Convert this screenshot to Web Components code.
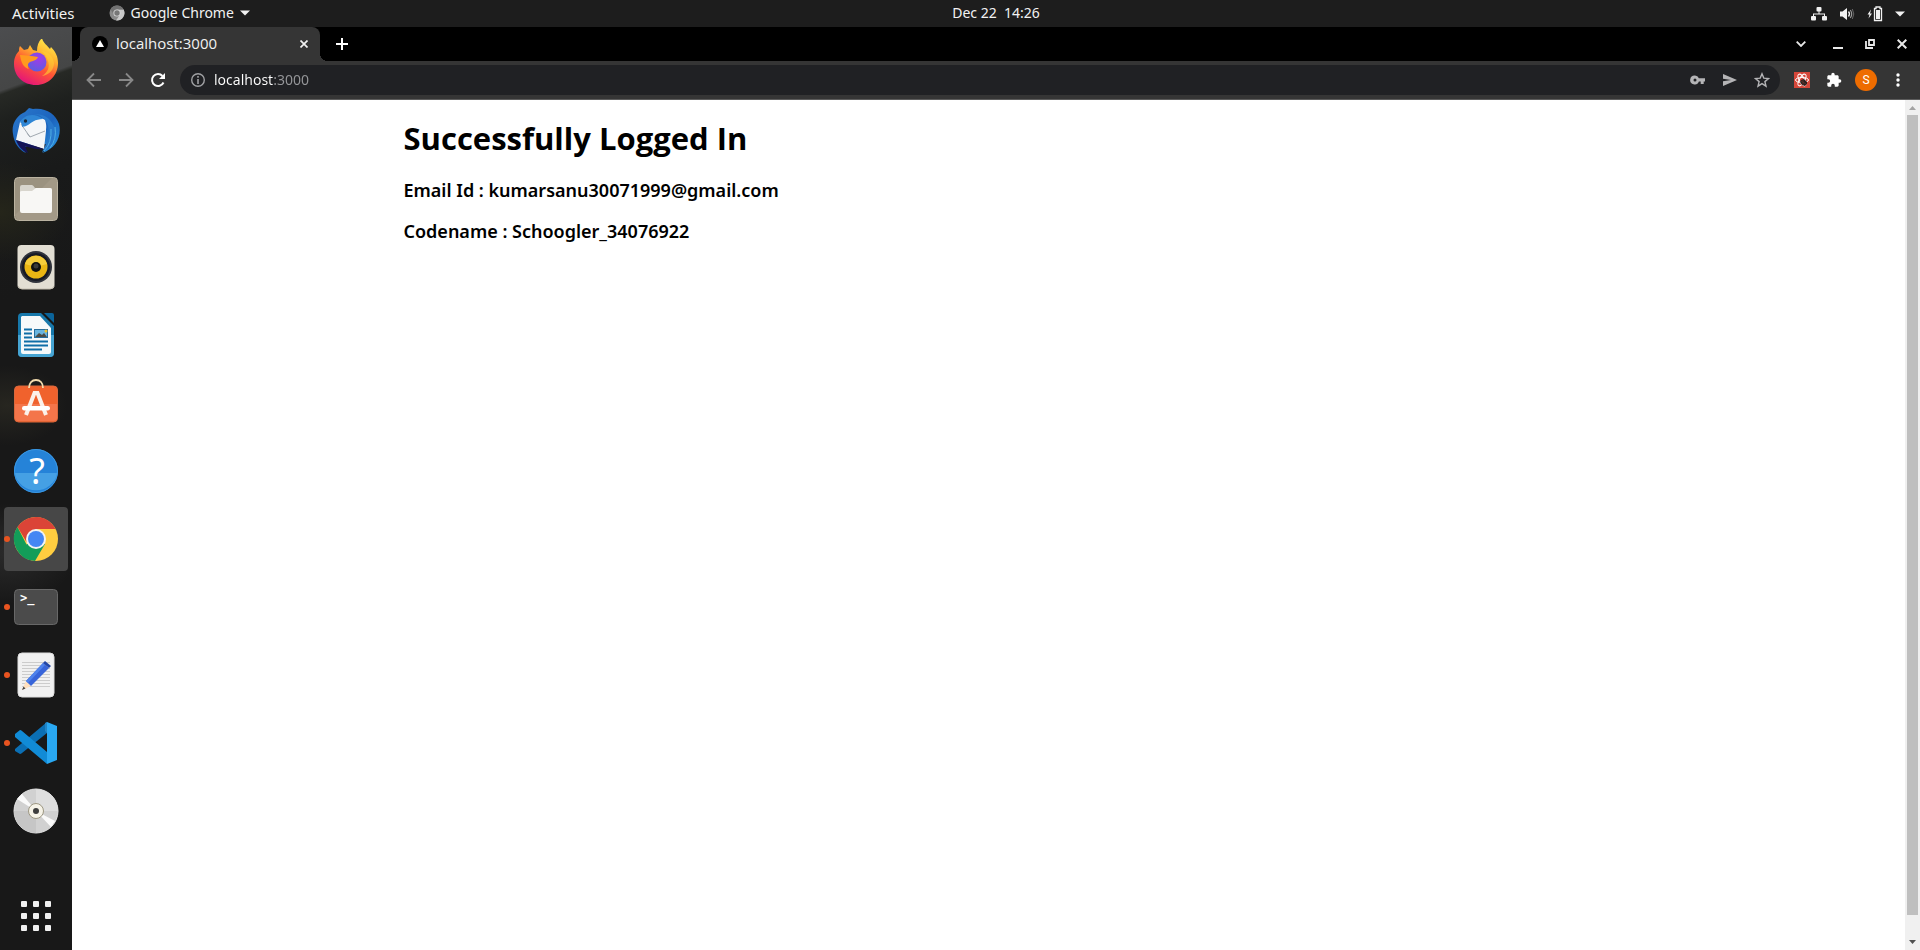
<!DOCTYPE html>
<html lang="en">
<head>
<meta charset="utf-8">
<title>localhost:3000</title>
<style>
  html, body { height: 100%; }
  body { margin: 0; background: #1d1d1d; font-family: "Noto Sans", "Open Sans", sans-serif; }
</style>
</head>
<body>
<desktop-shell></desktop-shell>

<script>
const define = (name, html) => {
  const template = document.createElement('template');
  template.innerHTML = html;
  customElements.define(name, class extends HTMLElement {
    constructor() {
      super();
      this.attachShadow({ mode: 'open' }).append(template.content.cloneNode(true));
    }
  });
};

/* Square button that holds one icon */
define('icon-button', `
<style>
  :host { display: block; }
  button { display: grid; place-items: center; width: 32px; height: 32px; margin: 0; padding: 0; border: 0; background: none; color: inherit; font: inherit; }
</style>
<button type="button"><slot></slot></button>`);

/* GNOME top bar */
define('top-bar', `
<style>
  :host { display: grid; grid-template-columns: 1fr auto 1fr; align-items: center; height: 27px; background: #1d1d1d; color: #f2f2f2; font-size: 14px; }
  .left { display: flex; align-items: center; gap: 34px; padding-left: 12px; }
  .right { display: flex; align-items: center; justify-content: flex-end; gap: 12px; padding-right: 15px; }
  button { display: flex; align-items: center; gap: 6px; padding: 0 0 2px; border: 0; background: none; color: inherit; font: inherit; line-height: 24px; white-space: pre; }
  .wide { font-size: 15px; }
  .date { margin-left: 72px; }
  svg { display: block; }
</style>
<div class="left">
  <button type="button" class="wide">Activities</button>
  <button type="button"><svg width="16" height="16" viewBox="0 0 16 16"><circle cx="8" cy="8" r="7.5" fill="#8a8a8a"/><path d="M8 4.5h6.600a7.500 7.500 0 0 1-7.600 10.900L10.900 9.700z" fill="#c9c9c9"/><path d="M1.500 4.300 5 9.900l-.5-3.500A4 4 0 0 1 8 4.500h6.600A7.500 7.500 0 0 0 1.500 4.300z" fill="#727272"/><circle cx="8" cy="8" r="3.600" fill="#d8d8d8"/><circle cx="8" cy="8" r="2.700" fill="#777"/></svg>Google Chrome<svg width="10" height="6" viewBox="0 0 10 6"><path d="M0 .5h10L5 5.500z" fill="#f2f2f2"/></svg></button>
</div>
<button type="button" class="date">Dec 22  14:26</button>
<div class="right">
  <svg width="16" height="16" viewBox="0 0 16 16" fill="#f2f2f2"><rect x="5.500" y="1" width="5" height="4.500" rx="1"/><rect x="0" y="10" width="5" height="4.500" rx="1"/><rect x="11" y="10" width="5" height="4.500" rx="1"/><path d="M7.500 5h1v2.500h5.500V10h-1V8.500H3V10H2V7.500h5.500z"/></svg>
  <svg width="16" height="16" viewBox="0 0 16 16"><path d="M1 5.500h2.500L8 2v12l-4.500-3.500H1z" fill="#f2f2f2"/><path d="M9.500 5.500q2 2.500 0 5" stroke="#f2f2f2" stroke-width="1.300" fill="none"/><path d="M11.300 4q2.800 4 0 8" stroke="#999" stroke-width="1.200" fill="none"/><path d="M13.300 3q3 5 0 10" stroke="#666" stroke-width="1" fill="none"/></svg>
  <svg width="16" height="16" viewBox="0 0 16 16"><path d="M4 3.500.500 8.500h2L1.500 12.500 5 7.500H3z" fill="#f2f2f2"/><path d="M7.500 2.500H9V1h4v1.500h1.500v12h-7z" fill="none" stroke="#f2f2f2" stroke-width="1.300"/><rect x="9" y="4" width="4" height="9" fill="#f2f2f2"/></svg>
  <svg width="10" height="6" viewBox="0 0 10 6"><path d="M0 .5h10L5 5.500z" fill="#f2f2f2"/></svg>
</div>`);

/* One launcher of the dock; "running" shows the dot, "active" the plate */
define('dock-item', `
<style>
  :host { display: block; position: relative; }
  button { display: grid; place-items: center; width: 64px; height: 64px; padding: 0; border: 0; border-radius: 4px; background: none; }
  :host([active]) button { background: #474747; }
  :host([running])::before { content: ""; position: absolute; left: 0; top: 29px; width: 6px; height: 6px; border-radius: 50%; background: #e95420; }
</style>
<button type="button"><slot></slot></button>`);

define('app-dock', `
<style>
  :host { display: flex; flex-direction: column; gap: 4px; box-sizing: border-box; width: 72px; padding: 4px 4px 2px;
    background:
      radial-gradient(ellipse 60px 40px at 10% 41%, #272620 0, transparent 100%),
      radial-gradient(ellipse 70px 50px at 10% 57%, #2a2a2a 0, transparent 100%),
      radial-gradient(ellipse 70px 50px at 0 20%, #25251a 0, transparent 100%),
      linear-gradient(160deg, #4c4d4f 0, #454646 60px, #272925 64px, #1e201e 90px, #191a1a 150px, transparent 260px),
      #181818; }
  .apps { margin-top: auto; }
  svg { display: block; }
</style>
<dock-item><svg width="48" height="48" viewBox="0 2 48 48">
  <defs><linearGradient id="fx" x1=".8" y1="0" x2=".3" y2="1"><stop offset="0" stop-color="#fff44f"/><stop offset=".35" stop-color="#ffb02e"/><stop offset=".6" stop-color="#ff5634"/><stop offset="1" stop-color="#e3127c"/></linearGradient><radialGradient id="fp" cx=".6" cy=".3" r=".8"><stop offset="0" stop-color="#a23be8"/><stop offset="1" stop-color="#5560e0"/></radialGradient></defs>
  <path d="M2 27c0-6 2-10 5-13 0-2 0-3 1-5l4 4 4-1 2-4 3 5 4 1c0-6 2-10 5-13 1 5 5 7 8 11l1-2c5 5 7 10 7 16 0 12-9 22-22 22S2 39 2 27z" fill="url(#fx)"/>
  <circle cx="25" cy="25" r="9.500" fill="url(#fp)"/>
  <path d="M8 18c5 0 12 1 18 2-1 3-5 4-8 5-2 1-3 4-1 7-5-1-8-6-9-14z" fill="#ff9a1f"/>
  <path d="M29 14c7 0 12 5 13 12 0 7-5 12-12 13 6-4 8-9 6-15-1-4-4-8-7-10z" fill="#ffcf35" opacity=".6"/>
</svg></dock-item>
<dock-item><svg width="48" height="48" viewBox="0 0 48 48">
  <defs><linearGradient id="tb" x1="0" y1="0" x2="1" y2="1"><stop offset="0" stop-color="#2a78cc"/><stop offset=".55" stop-color="#1c63bd"/><stop offset="1" stop-color="#2b9be5"/></linearGradient></defs>
  <path d="M1 27C-1 17 5 8 13 5l4-4 4 1c12-2 23 5 26 15 3 12-3 25-17 29 4-3 5-5 5-9L9 40l5 6C7 43 2 36 1 27z" fill="url(#tb)"/>
  <path d="M18 8c8-2 16 3 18 11 2 9-1 17-6 26 8-4 13-9 14-17-1-12-9-24-26-20z" fill="#2878cb"/>
  <path d="M39 22q1 14-7 22M43 20q2 12-5 21" stroke="#4fb0e6" stroke-width="1" fill="none"/>
  <path d="M8 15c5-4 20-6 25-2 2 6 1 8 1 11l-2 18L4 33z" fill="#f4f6f8"/>
  <path d="m9 17 9 13 15-6M18 30l-3-4" stroke="#a0a8b0" stroke-width="1" fill="none"/>
  <path d="m4 33 28 9c-7 1-13-1-19-3l3 7C10 44 6 39 4 33z" fill="#151458"/>
  <path d="M8 15c4-7 14-10 23-3-8 0-12 4-15 6s-4 1-6 2c0-2 0-3-2-5z" fill="#2f86d5"/>
  <circle cx="13.500" cy="14" r="1.700" fill="#1a2836"/>
</svg></dock-item>
<dock-item><svg width="48" height="48" viewBox="0 0 48 48">
  <rect x="2.500" y="2.500" width="43" height="43" rx="4" fill="#9b9280" stroke="#bbb3a1"/>
  <path d="M3 40 40 3h2q3 0 3 3v36q0 3-3 3H6z" fill="#a89f8c" opacity=".6"/>
  <path d="M8 12q0-2 2-2h10q1 0 3 3h15q2 0 2 2v15H8z" fill="#d8d5cd"/>
  <path d="M8 17q0-1 2-1h10l4-3h14q2 0 2 2v21q0 2-2 2H10q-2 0-2-2z" fill="#f8f7f5"/>
</svg></dock-item>
<dock-item><svg width="48" height="48" viewBox="0 0 48 48">
  <rect x="5.500" y="2" width="37" height="44" rx="4" fill="#e2ded3"/><path d="M6 43q2 3 4 3h28q3 0 4-3" stroke="#c5bfb0" fill="none"/>
  <circle cx="24" cy="24" r="16" fill="#30333c"/><circle cx="24" cy="24" r="14" fill="#171a25"/><circle cx="24" cy="24" r="11.500" fill="#e9b514"/><path d="M13 21a11.500 11.500 0 0 1 22 0L24 24z" fill="#f5cc3b"/><circle cx="24" cy="24" r="5" fill="#111"/><circle cx="24" cy="23" r="2.500" fill="#3a3a3a"/>
</svg></dock-item>
<dock-item><svg width="48" height="48" viewBox="0 0 48 48">
  <path d="M10 2h19l13 13v27q0 4-4 4H10q-4 0-4-4V6q0-4 4-4z" fill="#1778ab"/><path d="M6 24h36v18q0 4-4 4H10q-4 0-4-4z" fill="#46a4d2"/>
  <path d="M10 5h18l11 12v24q0 2-2 2H11q-2 0-2-2V6z" fill="#f6f9fa"/>
  <path d="M32 2h8q2 0 2 2v8z" fill="#0b649a"/>
  <path d="M12 18.500h8M12 22.500h8M12 26.500h8M12 30.500h24M12 34.500h24M12 38.500h18" stroke="#0f6ea7" stroke-width="2"/>
  <rect x="22.500" y="18.500" width="13" height="8" fill="#69b5df" stroke="#266d9c"/><path d="m23 26 4-4 3 2 2-2 3 4z" fill="#4b4c46"/><circle cx="34" cy="20" r="1.500" fill="#f1c22a"/>
</svg></dock-item>
<dock-item><svg width="48" height="48" viewBox="0 0 48 48">
  <rect x="2.500" y="7" width="43" height="36" rx="4" fill="#f0622d" stroke="#d9683d"/><path d="M3 25h42v14q0 3-3 3H6q-3 0-3-3z" fill="#f4754a"/>
  <path d="M17 9c0-5 3-8 7-8s7 3 7 8" fill="none" stroke="#f3dcae" stroke-width="1.800"/>
  <path d="m14 36 8.500-22h3L34 36" fill="none" stroke="#fbf1ea" stroke-width="4"/><rect x="10" y="27" width="28" height="4.500" rx="2.200" fill="#fff"/>
</svg></dock-item>
<dock-item><svg width="48" height="48" viewBox="0 0 48 48">
  <circle cx="24" cy="24" r="22" fill="#2583d8"/><path d="M2.500 26h43a22 22 0 0 1-43 0z" fill="#45a0e4"/><circle cx="24" cy="24" r="21.500" fill="none" stroke="#3a97e2"/>
  <text x="25" y="37" font-family="Noto Sans, sans-serif" font-size="36" text-anchor="middle" fill="#fff">?</text>
</svg></dock-item>
<dock-item active running><svg width="48" height="48" viewBox="0 0 48 48">
  <circle cx="24" cy="24" r="22" fill="#ffcd40"/>
  <path d="M24 24 14.500 29.500 5.500 12A22 22 0 0 0 23 46l10-17z" fill="#139d59"/>
  <path d="M5.500 12A22 22 0 0 1 43.500 14H24l-9.500 13z" fill="#db4437"/>
  <circle cx="24" cy="24" r="10" fill="#f3f3f3"/><circle cx="24" cy="24" r="8" fill="#4486f4"/>
</svg></dock-item>
<dock-item running><svg width="48" height="48" viewBox="0 0 48 48">
  <rect x="2.500" y="6.500" width="43" height="35" rx="4" fill="#4b4b4b" stroke="#686868"/>
  <text x="8" y="19" font-family="DejaVu Sans Mono, monospace" font-weight="700" font-size="12" fill="#fff">&gt;_</text>
</svg></dock-item>
<dock-item running><svg width="48" height="48" viewBox="0 0 48 48">
  <rect x="6" y="2" width="36" height="44" rx="4" fill="#f1f1f1" stroke="#ddd"/>
  <path d="M10 11.500h28M10 14.500h28M10 17.500h28M10 20.500h28M10 23.500h28M10 26.500h28M10 29.500h28M10 32.500h28M10 35.500h28" stroke="#ccc"/>
  <path d="m10 39 4-9 5 5z" fill="#ffdfbd"/><path d="m10 39 1.500-3.500 2 2z" fill="#444"/><path d="m14 30 17-18 6 5-18 18z" fill="#3764d9"/><path d="m14 30 17-18 2 2-17 18z" fill="#4e82ec"/><path d="m31 12 2-2 6 5-2 2z" fill="#2145a7"/>
</svg></dock-item>
<dock-item running><svg width="48" height="48" viewBox="0 0 48 48">
  <path d="m3 32 5 3q1 0 2-1l25-20V3L3 30z" fill="#0b6fb4"/>
  <path d="m3 15 5-4q1 0 2 1l25 21v12L3 18z" fill="#118bd6"/>
  <path d="m35 3 10 4v34l-10 4z" fill="#29a8f2"/><path d="m35 3-2 1v8l2 2z" fill="#2385c5"/>
</svg></dock-item>
<dock-item><svg width="48" height="48" viewBox="0 0 48 48">
  <circle cx="24" cy="24" r="22" fill="#d1d1d1" stroke="#e5e5e5"/><path d="M24 24V2A22 22 0 0 1 46 24z" fill="#dedede"/><path d="M24 24v22A22 22 0 0 1 2 24z" fill="#c6c6c6"/>
  <path d="M24 24 5 12l5-5z" fill="#fafafa"/><path d="m24 24 19 10-4 6z" fill="#fafafa"/>
  <circle cx="24" cy="24" r="7.500" fill="#f6f3e8" stroke="#9d9782"/><circle cx="24" cy="24" r="3" fill="#3e3e3e"/>
</svg></dock-item>
<dock-item class="apps"><svg width="48" height="48" viewBox="0 0 48 48" fill="#f2f2f2">
  <rect x="9" y="9" width="6" height="6" rx="1"/><rect x="21" y="9" width="6" height="6" rx="1"/><rect x="33" y="9" width="6" height="6" rx="1"/>
  <rect x="9" y="21" width="6" height="6" rx="1"/><rect x="21" y="21" width="6" height="6" rx="1"/><rect x="33" y="21" width="6" height="6" rx="1"/>
  <rect x="9" y="33" width="6" height="6" rx="1"/><rect x="21" y="33" width="6" height="6" rx="1"/><rect x="33" y="33" width="6" height="6" rx="1"/>
</svg></dock-item>`);

/* Chrome tab strip with window controls */
define('tab-strip', `
<style>
  :host { display: flex; align-items: stretch; height: 34px; padding: 0 2px 0 8px; background: #000; color: #f1f1f1; }
  .tab { position: relative; display: flex; align-items: center; box-sizing: border-box; width: 240px; padding: 0 12px; border-radius: 8px 8px 0 0; background: #353535; font: 15px "Open Sans", "Noto Sans", sans-serif; }
  .tab::before, .tab::after { content: ""; position: absolute; bottom: 0; width: 8px; height: 8px; }
  .tab::before { left: -8px; background: radial-gradient(circle at 0 0, #000 8px, #353535 8px); }
  .tab::after { right: -8px; background: radial-gradient(circle at 100% 0, #000 8px, #353535 8px); }
  .name { flex: 1; margin-left: 8px; padding-bottom: 2px; line-height: 32px; }
  .close { display: grid; place-items: center; width: 8px; height: 16px; padding: 0; border: 0; background: none; }
  .add { margin: 1px auto 0 6px; }
  .menu { margin: 1px 5px 0 0; }
  .win { margin-top: 1px; }
  svg { display: block; }
</style>
<div class="tab">
  <svg width="16" height="16" viewBox="0 0 16 16"><circle cx="8" cy="8" r="8" fill="#000"/><path d="M8 4l4 7H4z" fill="#fff"/></svg>
  <span class="name">localhost:3000</span>
  <button type="button" class="close"><svg width="8" height="8" viewBox="0 0 8 8"><path d="M.5.500l7 7M7.500.500l-7 7" stroke="#f1f1f1" stroke-width="1.700"/></svg></button>
</div>
<icon-button class="add"><svg width="12" height="12" viewBox="0 0 12 12"><path d="M6 0v12M0 6h12" stroke="#fff" stroke-width="2"/></svg></icon-button>
<icon-button class="menu"><svg width="10" height="6" viewBox="0 0 10 6"><path d="m.7.700 4.300 4.300L9.300.700" stroke="#e8e8e8" stroke-width="1.800" fill="none"/></svg></icon-button>
<icon-button class="win"><svg width="10" height="10" viewBox="0 0 10 10"><path d="M0 9h10" stroke="#e8e8e8" stroke-width="2"/></svg></icon-button>
<icon-button class="win"><svg width="10" height="10" viewBox="0 0 10 10"><path d="M4 1h5v5H4zM1 2v7h7" stroke="#e8e8e8" stroke-width="1.800" fill="none"/></svg></icon-button>
<icon-button class="win"><svg width="10" height="10" viewBox="0 0 10 10"><path d="m.7.700 8.600 8.600M9.300.700.700 9.300" stroke="#e8e8e8" stroke-width="2"/></svg></icon-button>`);

/* Address bar row */
define('tool-bar', `
<style>
  :host { display: flex; align-items: center; box-sizing: border-box; height: 39px; padding: 0 6px; background: #353535; border-bottom: 1px solid #5c5c5c; color: #e8e8e8; }
  .omnibox { display: flex; align-items: center; flex: 1; height: 30px; margin: 0 6px; padding: 0 2px 0 10px; border-radius: 15px; background: #202124; color: #b4b4b6; }
  input { flex: 1; min-width: 0; height: 28px; margin: 0 0 0 8px; padding: 0 0 2px; box-sizing: border-box; border: 0; outline: 0; font: 14px "Noto Sans", sans-serif; color: transparent; background: linear-gradient(90deg, #fff 59px, #96979a 59px); -webkit-background-clip: text; background-clip: text; }
  .tools { display: flex; gap: 0; }
  .avatar { display: grid; place-items: center; width: 22px; height: 22px; border-radius: 50%; background: #ee6c00; color: #fff; font: 12px Roboto, sans-serif; }
  svg { display: block; }
</style>
<icon-button><svg width="16" height="16" viewBox="0 0 16 16"><path d="M15 8H2M8 1.500 1.500 8 8 14.500" stroke="#888" stroke-width="1.800" fill="none"/></svg></icon-button>
<icon-button><svg width="16" height="16" viewBox="0 0 16 16"><path d="M1 8h13M8 1.500 14.500 8 8 14.500" stroke="#888" stroke-width="1.800" fill="none"/></svg></icon-button>
<icon-button><svg width="16" height="16" viewBox="0 0 16 16"><path d="M13.500 10.500A6 6 0 1 1 12.500 4" stroke="#fff" stroke-width="2" fill="none"/><path d="M15 1v6H9z" fill="#fff"/></svg></icon-button>
<div class="omnibox">
  <svg width="16" height="16" viewBox="0 0 16 16"><circle cx="8" cy="8" r="6.300" fill="none" stroke="#a0a1a4" stroke-width="1.400"/><path d="M8 7v5M8 4v1.700" stroke="#a0a1a4" stroke-width="1.600"/></svg>
  <input type="text" aria-label="Address" value="localhost:3000" spellcheck="false">
  <div class="tools">
    <icon-button><svg width="16" height="16" viewBox="0 0 16 16"><path fill="#b4b4b6" fill-rule="evenodd" d="M5 3.500A4.500 4.500 0 0 1 8.900 6.200H15v3.300h-1.300V12h-3V9.500H8.900A4.500 4.500 0 1 1 5 3.500zm0 3a1.500 1.500 0 1 0 0 3 1.500 1.500 0 0 0 0-3z"/></svg></icon-button>
    <icon-button><svg width="16" height="16" viewBox="0 0 16 16"><path fill="#b4b4b6" d="M1 2l14 6-14 6V9.300L9 8 1 6.700z"/></svg></icon-button>
    <icon-button><svg width="16" height="16" viewBox="0 0 16 16"><path d="m8 1.800 1.800 4.300 4.700.4-3.600 3.100 1.100 4.600L8 11.700l-4 2.500 1.100-4.600L1.500 6.500l4.700-.4z" fill="none" stroke="#b4b4b6" stroke-width="1.400"/></svg></icon-button>
  </div>
</div>
<icon-button><svg width="16" height="16" viewBox="0 0 16 16"><path fill="#d6473a" d="M0 0h16v16H0z"/><g fill="none" stroke="#fff" stroke-width="1"><ellipse cx="8" cy="8" rx="6.500" ry="2.600"/><ellipse cx="8" cy="8" rx="6.500" ry="2.600" transform="rotate(60 8 8)"/><ellipse cx="8" cy="8" rx="6.500" ry="2.600" transform="rotate(120 8 8)"/></g><path d="M7 8l3-1 3 3v2l-2 2-3-1-2-3z" fill="#29201f"/><path d="m7 9 5 3M9 7v6" stroke="#71332c" stroke-width=".7"/></svg></icon-button>
<icon-button><svg width="16" height="16" viewBox="0 0 24 24"><path fill="#fff" d="M20.500 11H19V7c0-1.100-.9-2-2-2h-4V3.500a2.500 2.500 0 0 0-5 0V5H4c-1.100 0-2 .9-2 2v3.800h1.500a2.700 2.700 0 0 1 0 5.400H2V20c0 1.100.9 2 2 2h3.800v-1.500a2.700 2.700 0 0 1 5.400 0V22H17c1.100 0 2-.9 2-2v-4h1.500a2.500 2.500 0 0 0 0-5z"/></svg></icon-button>
<icon-button><span class="avatar">S</span></icon-button>
<icon-button><svg width="4" height="14" viewBox="0 0 4 14" fill="#fff"><circle cx="2" cy="2" r="1.700"/><circle cx="2" cy="7" r="1.700"/><circle cx="2" cy="12" r="1.700"/></svg></icon-button>`);

/* Vertical scroll bar of the page */
define('scroll-bar', `
<style>
  :host { display: flex; flex-direction: column; width: 15px; background: #f0f0f0; }
  svg { display: block; flex: none; }
  .track { flex: 1; display: flex; flex-direction: column; padding: 0 2px 20px; }
  .thumb { flex: 1; background: #bfbfbf; }
</style>
<svg width="15" height="15" viewBox="0 0 15 15"><path d="M4 10h7L7.500 6z" fill="#a3a3a3"/></svg>
<div class="track"><div class="thumb"></div></div>
<svg width="15" height="15" viewBox="0 0 15 15"><path d="M4 5h7L7.500 9z" fill="#505050"/></svg>`);

/* The web page that the browser shows */
define('profile-page', `
<style>
  :host { display: block; background: #fff; color: #000; }
  main { max-width: 1170px; margin: 0 auto; padding-top: 18px; }
  h1 { margin: 0 0 20px; font: 700 31px/40px "Open Sans", "Noto Sans", sans-serif; }
  p { margin: 0 0 16px; font-weight: 600; font-size: 18px; line-height: 25px; }
</style>
<main>
  <h1>Successfully Logged In</h1>
  <p>Email Id : kumarsanu30071999@gmail.com</p>
  <p>Codename : Schoogler_34076922</p>
</main>`);

define('browser-window', `
<style>
  :host { display: flex; flex-direction: column; }
  .view { flex: 1; display: grid; grid-template-columns: 1fr auto; }
</style>
<tab-strip></tab-strip>
<tool-bar></tool-bar>
<div class="view"><profile-page></profile-page><scroll-bar></scroll-bar></div>`);

define('desktop-shell', `
<style>
  :host { display: grid; grid-template: auto 1fr / auto 1fr; min-height: 100vh; }
  top-bar { grid-column: 1 / -1; }
</style>
<top-bar></top-bar>
<app-dock></app-dock>
<browser-window></browser-window>`);
</script>
</body>
</html>
